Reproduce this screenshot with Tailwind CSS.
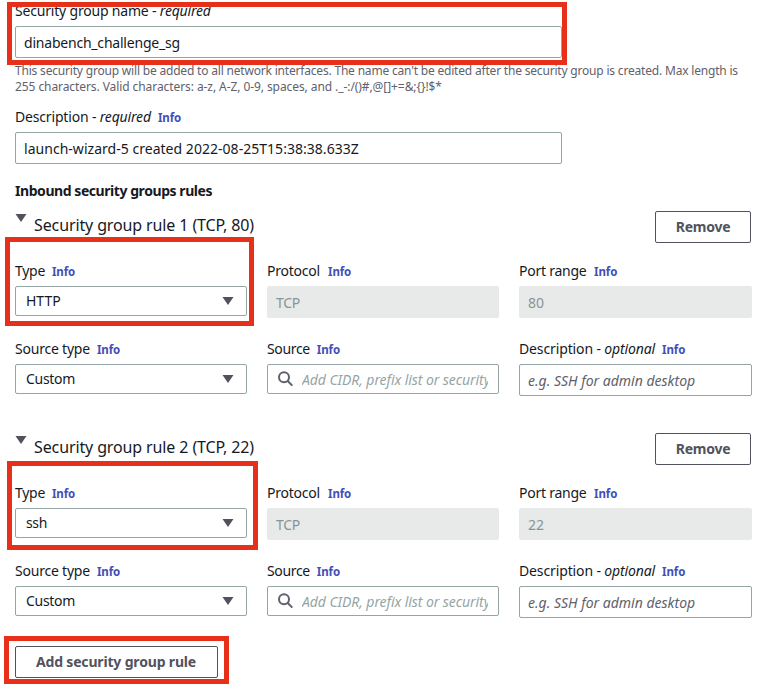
<!DOCTYPE html>
<html lang="en">
<head>
<meta charset="utf-8">
<title>Security group rules</title>
<script src="https://cdn.jsdelivr.net/npm/@tailwindcss/browser@4"></script>
</head>
<body class="relative h-[692px] w-[768px] overflow-hidden bg-white px-[15px] font-['Noto_Sans','Open_Sans',sans-serif] text-sm leading-[22px] text-[#16191f]">

<section>
  <div class="whitespace-pre tracking-[-0.19px]">Security group name - <i>required</i></div>
  <div class="mt-1 flex h-8 w-[547px] items-center rounded-[2px] border border-[#95a5a6] pl-2 pt-0.5 tracking-[-0.21px]">dinabench_challenge_sg</div>
  <p class="mt-[5px] whitespace-nowrap text-xs leading-4 text-[#5f616c]"><span class="tracking-[-0.19px]">This security group will be added to all network interfaces. The name can't be edited after the security group is created. Max length is</span><br><span class="tracking-[-0.08px]">255 characters. Valid characters: a-z, A-Z, 0-9, spaces, and ._-:/()#,@[]+=&amp;;{}!$*</span></p>
</section>

<section class="mt-[11px]">
  <div class="h-[22px] whitespace-pre tracking-[-0.17px]">Description - <i>required</i><b class="ml-[7px] text-[11.5px] leading-none tracking-[-0.1px] text-[#414fb8]">Info</b></div>
  <div class="mt-1 flex h-8 w-[547px] items-center rounded-[2px] border border-[#95a5a6] pl-2 pt-0.5 tracking-[0.03px]">launch-wizard-5 created 2022-08-25T15:38:38.633Z</div>
</section>

<h2 class="mt-4 font-bold tracking-[-0.44px]">Inbound security groups rules</h2>

<section class="mt-[9px] h-[222px]">
  <div class="flex h-8 items-start">
    <svg class="mt-[3px] h-2 w-3" viewBox="0 0 12 8"><path d="M.5 0h11L6 8z" fill="#50535e"/></svg>
    <h3 class="ml-[7px] mt-[3px] text-base leading-[22px] tracking-[-0.12px]">Security group rule 1 (TCP, 80)</h3>
    <button class="ml-auto mr-[2px] h-8 w-24 rounded-[2px] border border-[#50535e] font-bold tracking-[-0.25px] text-[#50535e]">Remove</button>
  </div>
  <div class="mt-[17px] grid grid-cols-[232px_232px_233px] gap-x-5">
    <div class="h-[78px]">
      <div class="h-[22px] whitespace-pre tracking-[-0.29px]">Type<b class="ml-[7px] text-[11.5px] leading-none tracking-[-0.1px] text-[#414fb8]">Info</b></div>
      <div class="mt-1 flex h-[30px] items-center justify-between rounded-[2px] border border-[#95a5a6] pl-2.5 pr-3"><span>HTTP</span><svg class="h-2 w-3" viewBox="0 0 12 8"><path d="M.5 0h11L6 8z" fill="#50535e"/></svg></div>
    </div>
    <div class="h-[78px]">
      <div class="h-[22px] whitespace-pre tracking-[-0.22px]">Protocol<b class="ml-2 text-[11.5px] leading-none tracking-[-0.1px] text-[#414fb8]">Info</b></div>
      <div class="mt-1 flex h-8 items-center rounded-[2px] bg-[#e7eae9] pl-[9px] pt-0.5 tracking-[-0.28px] text-[#879596]">TCP</div>
    </div>
    <div class="h-[78px]">
      <div class="h-[22px] whitespace-pre tracking-[-0.24px]">Port range<b class="ml-[7.5px] text-[11.5px] leading-none tracking-[-0.1px] text-[#414fb8]">Info</b></div>
      <div class="mt-1 flex h-8 items-center rounded-[2px] bg-[#e7eae9] pl-[9px] pt-0.5 text-[#879596]">80</div>
    </div>
    <div>
      <div class="h-[22px] whitespace-pre tracking-[-0.21px]">Source type<b class="ml-[7px] text-[11.5px] leading-none tracking-[-0.1px] text-[#414fb8]">Info</b></div>
      <div class="mt-1 flex h-[30px] items-center justify-between rounded-[2px] border border-[#95a5a6] pl-2.5 pr-3"><span class="tracking-[-0.3px]">Custom</span><svg class="h-2 w-3" viewBox="0 0 12 8"><path d="M.5 0h11L6 8z" fill="#50535e"/></svg></div>
    </div>
    <div>
      <div class="h-[22px] whitespace-pre tracking-[-0.35px]">Source<b class="ml-[7px] text-[11.5px] leading-none tracking-[-0.1px] text-[#414fb8]">Info</b></div>
      <div class="mt-1 flex h-[30px] items-center rounded-[2px] border border-[#95a5a6] pl-2.5 pr-2.5"><svg class="h-4 w-4 shrink-0" viewBox="0 0 16 16" fill="none" stroke="#5f616c" stroke-width="2"><circle cx="6" cy="6.3" r="5"/><path d="M9.7 10l4.6 4.6"/></svg><i class="ml-2 mt-px overflow-hidden whitespace-nowrap tracking-[-0.07px] text-[#95a5a6]">Add CIDR, prefix list or security</i></div>
    </div>
    <div>
      <div class="h-[22px] whitespace-pre tracking-[-0.13px]">Description - <i>optional</i><b class="ml-[7px] text-[11.5px] leading-none tracking-[-0.1px] text-[#414fb8]">Info</b></div>
      <div class="mt-1 flex h-8 items-center rounded-[2px] border border-[#95a5a6] pl-2 pt-0.5 italic text-[#5f616c]">e.g. SSH for admin desktop</div>
    </div>
  </div>
</section>

<section class="h-[222px]">
  <div class="flex h-8 items-start">
    <svg class="mt-[3px] h-2 w-3" viewBox="0 0 12 8"><path d="M.5 0h11L6 8z" fill="#50535e"/></svg>
    <h3 class="ml-[7px] mt-[3px] text-base leading-[22px] tracking-[-0.12px]">Security group rule 2 (TCP, 22)</h3>
    <button class="ml-auto mr-[2px] h-8 w-24 rounded-[2px] border border-[#50535e] font-bold tracking-[-0.25px] text-[#50535e]">Remove</button>
  </div>
  <div class="mt-[17px] grid grid-cols-[232px_232px_233px] gap-x-5">
    <div class="h-[78px]">
      <div class="h-[22px] whitespace-pre tracking-[-0.29px]">Type<b class="ml-[7px] text-[11.5px] leading-none tracking-[-0.1px] text-[#414fb8]">Info</b></div>
      <div class="mt-1 flex h-[30px] items-center justify-between rounded-[2px] border border-[#95a5a6] pl-2.5 pr-3"><span class="tracking-[-0.35px]">ssh</span><svg class="h-2 w-3" viewBox="0 0 12 8"><path d="M.5 0h11L6 8z" fill="#50535e"/></svg></div>
    </div>
    <div class="h-[78px]">
      <div class="h-[22px] whitespace-pre tracking-[-0.22px]">Protocol<b class="ml-2 text-[11.5px] leading-none tracking-[-0.1px] text-[#414fb8]">Info</b></div>
      <div class="mt-1 flex h-8 items-center rounded-[2px] bg-[#e7eae9] pl-[9px] pt-0.5 tracking-[-0.28px] text-[#879596]">TCP</div>
    </div>
    <div class="h-[78px]">
      <div class="h-[22px] whitespace-pre tracking-[-0.24px]">Port range<b class="ml-[7.5px] text-[11.5px] leading-none tracking-[-0.1px] text-[#414fb8]">Info</b></div>
      <div class="mt-1 flex h-8 items-center rounded-[2px] bg-[#e7eae9] pl-[9px] pt-0.5 text-[#879596]">22</div>
    </div>
    <div>
      <div class="h-[22px] whitespace-pre tracking-[-0.21px]">Source type<b class="ml-[7px] text-[11.5px] leading-none tracking-[-0.1px] text-[#414fb8]">Info</b></div>
      <div class="mt-1 flex h-[30px] items-center justify-between rounded-[2px] border border-[#95a5a6] pl-2.5 pr-3"><span class="tracking-[-0.3px]">Custom</span><svg class="h-2 w-3" viewBox="0 0 12 8"><path d="M.5 0h11L6 8z" fill="#50535e"/></svg></div>
    </div>
    <div>
      <div class="h-[22px] whitespace-pre tracking-[-0.35px]">Source<b class="ml-[7px] text-[11.5px] leading-none tracking-[-0.1px] text-[#414fb8]">Info</b></div>
      <div class="mt-1 flex h-[30px] items-center rounded-[2px] border border-[#95a5a6] pl-2.5 pr-2.5"><svg class="h-4 w-4 shrink-0" viewBox="0 0 16 16" fill="none" stroke="#5f616c" stroke-width="2"><circle cx="6" cy="6.3" r="5"/><path d="M9.7 10l4.6 4.6"/></svg><i class="ml-2 mt-px overflow-hidden whitespace-nowrap tracking-[-0.07px] text-[#95a5a6]">Add CIDR, prefix list or security</i></div>
    </div>
    <div>
      <div class="h-[22px] whitespace-pre tracking-[-0.13px]">Description - <i>optional</i><b class="ml-[7px] text-[11.5px] leading-none tracking-[-0.1px] text-[#414fb8]">Info</b></div>
      <div class="mt-1 flex h-8 items-center rounded-[2px] border border-[#95a5a6] pl-2 pt-0.5 italic text-[#5f616c]">e.g. SSH for admin desktop</div>
    </div>
  </div>
</section>

<button class="mt-[-9px] block h-8 w-[203px] rounded-[2px] border border-[#50535e] pr-px font-bold tracking-[-0.17px] text-[#50535e]">Add security group rule</button>

<!-- Highlight annotations -->
<div class="absolute left-[7px] top-[2px] h-[63px] w-[560px] border-5 border-[#e6301a]"></div>
<div class="absolute left-[5px] top-[237px] h-[89px] w-[249px] border-5 border-[#e6301a]"></div>
<div class="absolute left-[7px] top-[461px] h-[89px] w-[251px] border-5 border-[#e6301a]"></div>
<div class="absolute left-[4px] top-[636px] h-[48px] w-[225px] border-5 border-[#e6301a]"></div>
</body>
</html>
